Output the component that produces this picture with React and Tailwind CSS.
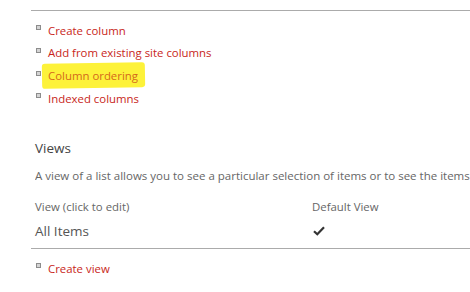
import React from "react";

const font = { fontFamily: '"Open Sans", "Segoe UI", sans-serif' };

function Bullet() {
  return <span className="inline-block w-[5px] h-[5px] border border-[#8c8c8c] bg-[#d4d4d4] mr-[7px] -mt-[5px] shrink-0" />;
}

function LinkItem({ children, highlight }) {
  return (
    <div className="h-[22.7px] flex items-center pl-[5px]">
      <Bullet />
      {highlight ? (
        <span className="relative text-[#d4691a]">
          <span className="absolute -left-[6px] -right-[7px] -top-[4px] -bottom-[4px] bg-[#fdf23a] rounded-[3px] -rotate-[1deg]" />
          <span className="relative">{children}</span>
        </span>
      ) : (
        <span className="text-[#c8261a]">{children}</span>
      )}
    </div>
  );
}

export default function App() {
  const links = ["Create column", "Add from existing site columns", "Column ordering", "Indexed columns"];

  return (
    <div className="w-[470px] h-[292px] bg-white overflow-hidden pl-[31px] pt-[10px] text-[11.4px]" style={font}>
      <div className="border-t border-[#ababab]" />

      {/* Columns links */}
      <div className="pt-[8px]">
        {links.map((l) => (
          <LinkItem key={l} highlight={l === "Column ordering"}>
            {l}
          </LinkItem>
        ))}
      </div>

      {/* Views */}
      <div className="pl-[4px] pt-[26px]">
        <div className="text-[13.5px] text-[#444] h-[24px] leading-[24px]">Views</div>
        <div className="text-[11.5px] text-[#666] whitespace-nowrap overflow-hidden h-[29px] leading-[32px]">
          A view of a list allows you to see a particular selection of items or to see the items so
        </div>

        <div className="flex text-[11.4px] text-[#666] h-[27px] items-end pb-[1px]">
          <div className="w-[277px]">View (click to edit)</div>
          <div>Default View</div>
        </div>
        <div className="flex items-center h-[30px] text-[13.5px] text-[#555]">
          <div className="w-[277px]">All Items</div>
          <svg width="12" height="10" viewBox="0 0 12 10" className="ml-[1px]">
            <path d="M1 5.2 L4.3 8.3 L11 1.2" fill="none" stroke="#333" strokeWidth="2.2" />
          </svg>
        </div>
      </div>

      <div className="border-t border-[#ababab] mt-[2px]" />
      <div className="pt-[8px]">
        <LinkItem>Create view</LinkItem>
      </div>
    </div>
  );
}
